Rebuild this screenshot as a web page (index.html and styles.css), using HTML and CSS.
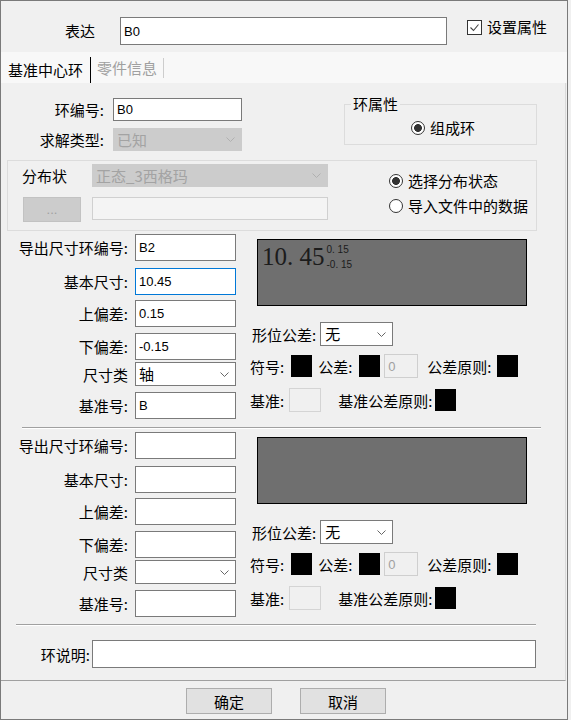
FILE: index.html
```html
<!DOCTYPE html>
<html lang="zh-CN">
<head>
  <meta charset="UTF-8" />
  <title>基准中心环</title>
  <link rel="stylesheet" href="styles.css">
</head>
<body>
  <div class="dialog">
    <!-- 表达 -->
    <div class="expr-row">
      <span class="expr-label">表达</span>
      <input class="field expr-input" type="text" value="B0">
      <label class="check">
        <span class="check-box">
          <svg width="11" height="11" viewBox="0 0 11 11"><polyline points="1.5,5.5 4.5,8.5 9.5,2.5" fill="none" stroke="#444" stroke-width="1.1"/></svg>
        </span>
        设置属性
      </label>
    </div>

    <!-- Tabs -->
    <div class="tabs">
      <span class="tab active">基准中心环</span>
      <span class="tab">零件信息</span>
    </div>

    <div class="panel">
      <div class="ring-row">
        <div class="ring-fields">
          <span class="lbl">环编号:</span>
          <input class="field sm" type="text" value="B0">
          <span class="lbl">求解类型:</span>
          <div class="select disabled sm">
            <span>已知</span>
            <svg class="chev" width="9" height="5" viewBox="0 0 9 5"><polyline points="0.5,0.5 4.5,4.5 8.5,0.5" fill="none" stroke="currentColor"/></svg>
          </div>
        </div>
        <fieldset class="group ring-attr">
          <legend>环属性</legend>
          <label class="radio"><span class="radio-dot checked"></span>组成环</label>
        </fieldset>
      </div>

      <!-- 分布状态 -->
      <div class="group dist">
        <div class="dist-fields">
          <span class="dist-label">分布状</span>
          <div class="select disabled sm">
            <span>正态_3西格玛</span>
            <svg class="chev" width="9" height="5" viewBox="0 0 9 5"><polyline points="0.5,0.5 4.5,4.5 8.5,0.5" fill="none" stroke="currentColor"/></svg>
          </div>
          <button class="btn-browse" disabled>...</button>
          <input class="field sm off" type="text" disabled>
        </div>
        <div class="dist-options">
          <label class="radio"><span class="radio-dot checked"></span>选择分布状态</label>
          <label class="radio"><span class="radio-dot"></span>导入文件中的数据</label>
        </div>
      </div>

      <!-- 导出尺寸 1 -->
      <div class="dim-section">
        <div class="dim-form">
          <span class="lbl">导出尺寸环编号:</span>
          <input class="field" type="text" value="B2">
          <span class="lbl">基本尺寸:</span>
          <input class="field focus" type="text" value="10.45">
          <span class="lbl">上偏差:</span>
          <input class="field" type="text" value="0.15">
          <span class="lbl">下偏差:</span>
          <input class="field" type="text" value="-0.15">
          <span class="lbl short">尺寸类</span>
          <div class="select">
            <span>轴</span>
            <svg class="chev" width="9" height="5" viewBox="0 0 9 5"><polyline points="0.5,0.5 4.5,4.5 8.5,0.5" fill="none" stroke="currentColor"/></svg>
          </div>
          <span class="lbl">基准号:</span>
          <input class="field" type="text" value="B">
        </div>
        <div class="dim-side">
          <div class="preview">
            <span class="dim-main">10. 45</span>
            <span class="tol"><span>0. 15</span><span>-0. 15</span></span>
          </div>
          <div class="tol-row">
            <span class="tol-label">形位公差:</span>
            <div class="select tol-select">
              <span>无</span>
              <svg class="chev" width="9" height="5" viewBox="0 0 9 5"><polyline points="0.5,0.5 4.5,4.5 8.5,0.5" fill="none" stroke="currentColor"/></svg>
            </div>
          </div>
          <div class="sym-row">
            <span>符号:</span>
            <span class="swatch sym"></span>
            <span class="tol-name">公差:</span>
            <span class="swatch tol-swatch"></span>
            <input class="mini" type="text" value="0" disabled>
            <span class="rule-name">公差原则:</span>
            <span class="swatch rule"></span>
          </div>
          <div class="datum-row">
            <span>基准:</span>
            <span class="datum-box"></span>
            <span class="datum-rule">基准公差原则:</span>
            <span class="swatch"></span>
          </div>
        </div>
      </div>

      <div class="sep"></div>

      <!-- 导出尺寸 2 -->
      <div class="dim-section">
        <div class="dim-form">
          <span class="lbl">导出尺寸环编号:</span>
          <input class="field" type="text">
          <span class="lbl">基本尺寸:</span>
          <input class="field" type="text">
          <span class="lbl">上偏差:</span>
          <input class="field" type="text">
          <span class="lbl">下偏差:</span>
          <input class="field" type="text">
          <span class="lbl short">尺寸类</span>
          <div class="select">
            <span></span>
            <svg class="chev" width="9" height="5" viewBox="0 0 9 5"><polyline points="0.5,0.5 4.5,4.5 8.5,0.5" fill="none" stroke="currentColor"/></svg>
          </div>
          <span class="lbl">基准号:</span>
          <input class="field" type="text">
        </div>
        <div class="dim-side">
          <div class="preview"></div>
          <div class="tol-row">
            <span class="tol-label">形位公差:</span>
            <div class="select tol-select">
              <span>无</span>
              <svg class="chev" width="9" height="5" viewBox="0 0 9 5"><polyline points="0.5,0.5 4.5,4.5 8.5,0.5" fill="none" stroke="currentColor"/></svg>
            </div>
          </div>
          <div class="sym-row">
            <span>符号:</span>
            <span class="swatch sym"></span>
            <span class="tol-name">公差:</span>
            <span class="swatch tol-swatch"></span>
            <input class="mini" type="text" value="0" disabled>
            <span class="rule-name">公差原则:</span>
            <span class="swatch rule"></span>
          </div>
          <div class="datum-row">
            <span>基准:</span>
            <span class="datum-box"></span>
            <span class="datum-rule">基准公差原则:</span>
            <span class="swatch"></span>
          </div>
        </div>
      </div>

      <div class="sep sep-last"></div>

      <div class="note-row">
        <span class="lbl note-label">环说明:</span>
        <input class="field note-input" type="text">
      </div>
    </div>

    <div class="buttons">
      <button class="btn">确定</button>
      <button class="btn">取消</button>
    </div>
  </div>
</body>
</html>
```

FILE: styles.css
```css
* {
  margin: 0;
  padding: 0;
  box-sizing: border-box;
}
body {
  width: 571px;
  height: 720px;
  background: #f0f0f0;
  font-family: "Noto Sans CJK SC", sans-serif;
  font-size: 15px;
  color: #000;
  overflow: hidden;
}
.dialog {
  width: 568px;
  height: 720px;
  border: 1px solid #7a7a7a;
  background: #f0f0f0;
}

/* Inputs and selects */
.field {
  height: 27px;
  border: 1px solid #7a7a7a;
  background: #fff;
  padding: 0 3px;
  font-family: "Liberation Sans", sans-serif;
  font-size: 13px;
  color: #000;
  outline: none;
}
.field.sm {
  height: 23px;
}
.field.focus {
  border-color: #0078d7;
}
.field.off {
  background: #f4f4f4;
  border-color: #d0d0d0;
}
.select {
  display: flex;
  align-items: center;
  justify-content: space-between;
  height: 24px;
  border: 1px solid #7a7a7a;
  background: #fff;
  padding: 0 6px 0 3px;
  line-height: 20px;
  color: #000;
}
.select.sm {
  height: 23px;
}
.select .chev {
  color: #666;
}
.select.disabled {
  background: #cccccc;
  border-color: #cccccc;
  color: #a3a3a3;
}
.select.disabled .chev {
  color: #b0b0b0;
}
.lbl {
  display: flex;
  align-items: center;
  justify-content: flex-end;
  height: 27px;
  white-space: nowrap;
}
.ring-fields .lbl {
  height: 23px;
}
.lbl.short {
  height: 24px;
}

/* Top row */
.expr-row {
  display: flex;
  align-items: flex-start;
  height: 51px;
  padding: 16px 0 0 64px;
}
.expr-label {
  width: 55px;
  line-height: 28px;
}
.expr-input {
  width: 327px;
  height: 28px;
}
.check {
  display: flex;
  align-items: center;
  gap: 5px;
  height: 20px;
  line-height: 20px;
  margin-left: 20px;
}
.check-box {
  display: flex;
  align-items: center;
  justify-content: center;
  width: 15px;
  height: 15px;
  border: 1px solid #333;
  background: #fff;
}

/* Tabs */
.tabs {
  display: flex;
  align-items: flex-end;
  height: 31px;
  background: #f8f8f8;
}
.tab {
  height: 26px;
  line-height: 26px;
  padding: 0 7px;
  border-right: 1px solid #000;
}
.tab + .tab {
  height: 20px;
  line-height: 20px;
  padding: 0 6px;
  margin-bottom: 5px;
  color: #a0a0a0;
  border-right-color: #cdcdcd;
}

.panel {
  width: 565px;
  height: 598px;
  border-right: 1px solid #dadada;
  border-bottom: 1px solid #a0a0a0;
}

/* 环编号 / 环属性 */
.ring-row {
  display: flex;
  align-items: flex-start;
  padding-top: 11px;
}
.ring-fields {
  display: grid;
  grid-template-columns: 103px 129px;
  grid-template-rows: 23px 23px;
  column-gap: 9px;
  row-gap: 7px;
  margin-top: 4px;
}
.group {
  border: 1px solid #dcdcdc;
}
.ring-attr {
  min-width: 0;
  width: 193px;
  height: 51px;
  margin-left: 102px;
}
.ring-attr legend {
  margin-left: 6px;
  padding: 0 2px;
  line-height: 20px;
}
.ring-attr .radio {
  margin: 4px 0 0 66px;
}
.radio {
  display: flex;
  align-items: center;
  gap: 5px;
  height: 20px;
  line-height: 20px;
}
.radio-dot {
  width: 14px;
  height: 14px;
  border: 1px solid #333;
  border-radius: 50%;
  background: #fff;
}
.radio-dot.checked {
  background: radial-gradient(circle, #333 0 3.6px, #fff 4.2px);
}

/* 分布状 */
.dist {
  display: flex;
  width: 530px;
  height: 71px;
  margin: 9px 0 0 6px;
}
.dist-fields {
  display: grid;
  grid-template-columns: 84px 236px;
  grid-template-rows: 23px 25px;
  row-gap: 10px;
  padding-top: 3px;
}
.dist-label {
  padding-left: 14px;
  line-height: 23px;
}
.btn-browse {
  width: 58px;
  height: 25px;
  margin-left: 15px;
  background: #cccccc;
  border: 1px solid #c2c2c2;
  color: #a0a0a0;
  font-family: "Liberation Sans", sans-serif;
  font-size: 13px;
}
.dist-options {
  display: flex;
  flex-direction: column;
  gap: 5px;
  margin-left: 61px;
  padding-top: 10px;
}

/* 导出尺寸 sections */
.dim-section {
  display: flex;
  margin-top: 3px;
}
.dim-form {
  display: grid;
  grid-template-columns: 127px 101px;
  grid-template-rows: 34px 32px 33px 29px 30px 27px;
  column-gap: 7px;
  align-items: start;
}
.dim-side {
  margin-left: 14px;
}
.preview {
  display: flex;
  align-items: flex-start;
  width: 270px;
  height: 67px;
  margin: 5px 0 0 7px;
  padding: 4px 0 0 4px;
  background: #6f6f6f;
  border: 1px solid #000;
  color: #1c1c1c;
}
.dim-main {
  font-family: "Liberation Serif", serif;
  font-size: 25px;
  line-height: 25px;
}
.tol {
  display: flex;
  flex-direction: column;
  gap: 4px;
  margin-left: 2px;
  font-family: "Liberation Sans", sans-serif;
  font-size: 10px;
  line-height: 11px;
}
.tol-row {
  display: flex;
  align-items: center;
  height: 24px;
  margin-top: 16px;
}
.tol-label {
  margin: 0 4px 0 2px;
}
.tol-select {
  width: 73px;
  padding-left: 4px;
}
.sym-row,
.datum-row {
  display: flex;
  align-items: center;
  height: 24px;
  margin-top: 8px;
}
.datum-row {
  margin-top: 10px;
}
.swatch {
  width: 21px;
  height: 22px;
  background: #000;
}
.sym {
  margin-left: 7px;
}
.tol-name {
  margin-left: 6px;
}
.tol-swatch {
  margin-left: 7px;
}
.mini {
  width: 34px;
  height: 24px;
  margin-left: 4px;
  padding-left: 3px;
  border: 1px solid #cfcfcf;
  background: #f0f0f0;
  color: #a0a0a0;
  font-family: "Liberation Sans", sans-serif;
  font-size: 13px;
}
.rule-name {
  margin: 0 5px 0 9px;
}
.datum-box {
  width: 32px;
  height: 24px;
  margin-left: 5px;
  border: 1px solid #d4d4d4;
  background: #f0f0f0;
}
.datum-rule {
  margin: 0 3px 0 17px;
}

.sep {
  width: 519px;
  height: 2px;
  margin: 8px 0 0 21px;
  border-top: 1px solid #a0a0a0;
  border-bottom: 1px solid #fff;
}
.sep-last {
  width: 520px;
  margin: 7px 0 0 15px;
}

.note-row {
  display: flex;
  margin-top: 14px;
}
.note-label {
  width: 89px;
  height: 28px;
  margin-right: 2px;
}
.note-input {
  width: 444px;
  height: 28px;
}

/* Dialog buttons */
.buttons {
  display: flex;
  gap: 28px;
  padding: 7px 0 0 185px;
}
.btn {
  width: 86px;
  height: 26px;
  background: #e1e1e1;
  border: 1px solid #adadad;
  font-family: "Noto Sans CJK SC", sans-serif;
  font-size: 15px;
  color: #000;
}
```
